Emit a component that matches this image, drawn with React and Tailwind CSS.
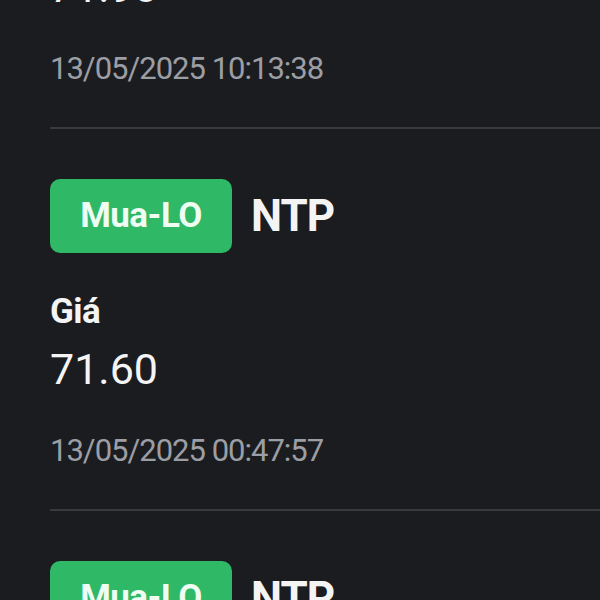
const orders = [
  { side: 'Mua-LO', code: 'NTP', price: '71.90', time: '13/05/2025 10:13:38' },
  { side: 'Mua-LO', code: 'NTP', price: '71.60', time: '13/05/2025 00:47:57' },
  { side: 'Mua-LO', code: 'NTP', price: '71.60', time: '12/05/2025 14:22:10' },
];

function OrderItem({ o }) {
  return (
    <div className="pt-[50px] pb-[40px]">
      <div className="flex items-center gap-[19px] h-[74px]">
        <span className="h-[74px] w-[182px] rounded-[10px] bg-[#2fb866] flex items-center justify-center text-[35px] font-bold text-[#eefcf2] tracking-[-0.5px]">
          {o.side}
        </span>
        <span className="text-[44px] font-bold text-[#f4f4f4] tracking-[-1px]">{o.code}</span>
      </div>
      <div className="mt-[40px] text-[35px] leading-[38px] font-bold text-[#f4f4f4] tracking-[-0.5px]">Giá</div>
      <div className="mt-[14px] text-[43px] leading-[48px] text-[#f4f4f4]">{o.price}</div>
      <div className="mt-[40px] text-[31px] leading-[36px] text-[#9c9ea5] tracking-[-1px]">{o.time}</div>
    </div>
  );
}

export default function App() {
  return (
    <div className="h-[600px] w-[600px] overflow-hidden bg-[#1b1c1f] font-['Roboto',sans-serif]">
      <div className="-mt-[253px] pl-[50px]">
        {orders.map((o, i) => (
          <div key={i}>
            <OrderItem o={o} />
            <div className="h-[2px] bg-[#393a3e]" />
          </div>
        ))}
      </div>
    </div>
  );
}
